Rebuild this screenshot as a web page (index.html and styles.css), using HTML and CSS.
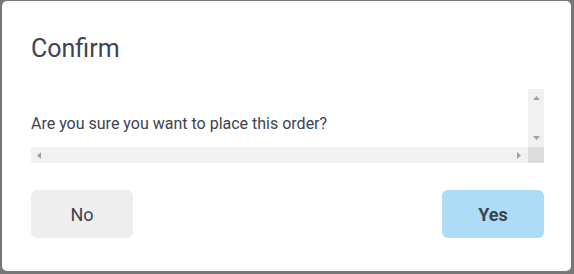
FILE: index.html
```html
<!DOCTYPE html>
<html lang="en">
<head>
<meta charset="utf-8">
<title>Confirm</title>
<link rel="stylesheet" href="styles.css">
</head>
<body>
<div class="dialog" role="dialog" aria-labelledby="dlg-title">
  <h1 class="dialog-title" id="dlg-title">Confirm</h1>
  <div class="dialog-body">
    <div class="dialog-content">
      <p class="dialog-message">Are you sure you want to place this order?</p>
    </div>
    <div class="scrollbar scrollbar-v">
      <svg class="arrow" width="7" height="4" viewBox="0 0 7 4"><polygon points="3.5,0 7,4 0,4"/></svg>
      <svg class="arrow" width="7" height="4" viewBox="0 0 7 4"><polygon points="0,0 7,0 3.5,4"/></svg>
    </div>
    <div class="scrollbar scrollbar-h">
      <svg class="arrow" width="4" height="7" viewBox="0 0 4 7"><polygon points="0,3.5 4,0 4,7"/></svg>
      <svg class="arrow" width="4" height="7" viewBox="0 0 4 7"><polygon points="0,0 4,3.5 0,7"/></svg>
    </div>
    <div class="scrollbar-corner"></div>
  </div>
  <div class="dialog-actions">
    <button class="btn btn-secondary" type="button">No</button>
    <button class="btn btn-primary" type="button">Yes</button>
  </div>
</div>
</body>
</html>
```
FILE: styles.css
```css
* { box-sizing: border-box; }
html, body { margin: 0; padding: 0; }
body {
  width: 574px;
  height: 274px;
  background: #787878;
  font-family: Roboto, "Liberation Sans", Arial, sans-serif;
  color: #3d4350;
  overflow: hidden;
  padding: 1px 3px 3px 2px;
}
.dialog {
  width: 569px;
  height: 270px;
  background: #ffffff;
  border-radius: 5px;
  padding: 33px 27px 0 29px;
  display: flex;
  flex-direction: column;
}
.dialog-title {
  margin: 0;
  font-size: 25px;
  font-weight: 400;
  line-height: 30px;
}
.dialog-body {
  margin-top: 25px;
  height: 74px;
  display: grid;
  grid-template-columns: 1fr 16px;
  grid-template-rows: 1fr 16px;
}
.dialog-content {
  overflow: hidden;
}
.dialog-message {
  margin: 0;
  padding-top: 25px;
  font-size: 16px;
  line-height: 19px;
  white-space: nowrap;
}
.scrollbar {
  background: #f1f1f1;
  display: flex;
  justify-content: space-between;
  align-items: center;
}
.scrollbar-v {
  flex-direction: column;
  padding: 7px 0;
}
.scrollbar-h {
  padding: 0 7px 0 6px;
}
.scrollbar-corner {
  background: #dcdcdc;
}
.arrow {
  display: block;
  fill: #a3a3a3;
}
.dialog-actions {
  margin-top: 27px;
  display: flex;
  justify-content: space-between;
}
.btn {
  width: 102px;
  height: 48px;
  border: none;
  border-radius: 6px;
  font-family: inherit;
  font-size: 18px;
  color: #3d4350;
  padding: 0;
}
.btn-secondary { background: #eeeeee; font-weight: 400; }
.btn-primary { background: #addcf6; font-weight: 700; }
```
